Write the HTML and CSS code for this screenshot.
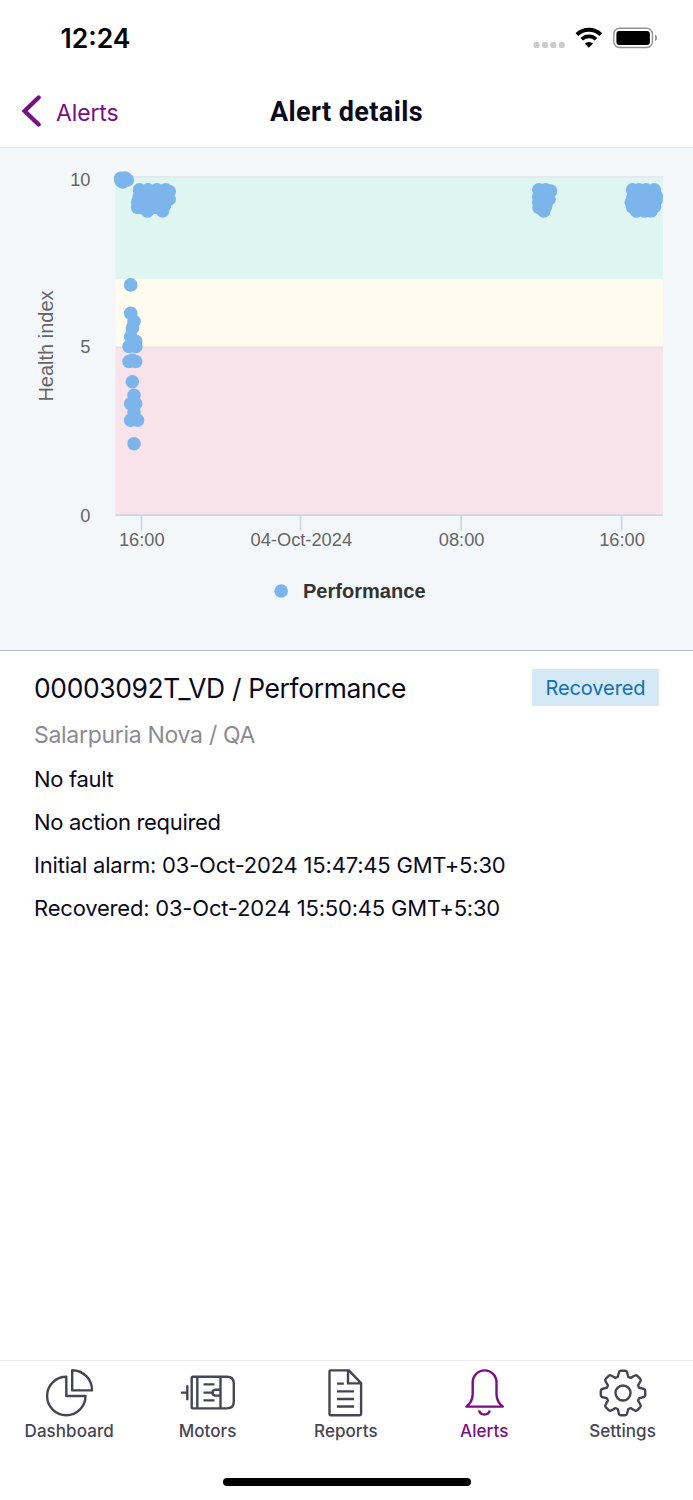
FILE: index.html
```html
<!DOCTYPE html>
<html lang="en">
<head>
<meta charset="utf-8">
<title>Alert details</title>
<link rel="stylesheet" href="styles.css">
</head>
<body>
<div class="screen">
  <header class="status-bar">
    <span class="clock">12:24</span>
    <svg class="status-icons" width="126" height="24" viewBox="532 26 126 24" aria-hidden="true">
      <g fill="#cbcbcb"><rect x="533.5" y="42" width="6" height="6" rx="2"/><rect x="542" y="42" width="6" height="6" rx="2"/><rect x="550.3" y="42" width="6" height="6" rx="2"/><rect x="558.8" y="42" width="6" height="6" rx="2"/></g>
      <path d="M576.9 34.6a17 17 0 0 1 24 0" fill="none" stroke="#000" stroke-width="4"/>
      <path d="M581.8 39.3a10 10 0 0 1 14.2 0" fill="none" stroke="#000" stroke-width="3.6"/>
      <path d="M588.9 47.8l-4.1-4.2a6 6 0 0 1 8.2 0z"/>
      <rect x="613.8" y="28.3" width="38.6" height="19.2" rx="5.6" fill="#fff" stroke="#929292" stroke-width="1.4"/>
      <rect x="616.4" y="30.9" width="33.5" height="14" rx="3"/>
      <path d="M655 34.6c2.7 1.4 2.7 5.2 0 6.6z" fill="#929292"/>
    </svg>
  </header>
  <nav class="nav-bar">
    <a class="back"><svg width="22" height="34" viewBox="0 0 22 34" aria-hidden="true"><path d="M18.6 2.5 4.6 16l14 13.5" fill="none" stroke="#780f83" stroke-width="4.3" stroke-linecap="round"/></svg><span>Alerts</span></a>
    <h1 class="title">Alert details</h1>
  </nav>
  <section class="chart">
    <svg width="693" height="502" viewBox="0 148 693 502" role="img" aria-label="Health index">
      <path fill="#dff5f1" d="M115.5 178H663v101H115.5z"/>
      <path fill="#fffbee" d="M115.5 279H663v68H115.5z"/>
      <path fill="#f8e3ea" d="M115.5 347H663v168H115.5z"/>
      <path d="M115.5 177H663M115.5 347.3H663" stroke="#e3e3e6" stroke-width="1.6"/>
      <path d="M115.5 515.2H663M141.5 515v15.5M300.5 515v15.5M461.2 515v15.5M621.7 515v15.5" stroke="#ccd6eb" stroke-width="1.7"/>
      <g class="axis-text">
        <text x="90.5" y="186" text-anchor="end">10</text>
        <text x="90.5" y="353" text-anchor="end">5</text>
        <text x="90.5" y="522" text-anchor="end">0</text>
        <text x="141.8" y="545.5" text-anchor="middle">16:00</text>
        <text x="301.3" y="545.5" text-anchor="middle">04-Oct-2024</text>
        <text x="461.6" y="545.5" text-anchor="middle">08:00</text>
        <text x="622" y="545.5" text-anchor="middle">16:00</text>
      </g>
      <text class="axis-title" transform="translate(53 346) rotate(-90)" text-anchor="middle">Health index</text>
      <g class="points">
        <circle cx="120.7" cy="178.2" r="6.8"/><circle cx="120.9" cy="180.5" r="6.8"/><circle cx="122.6" cy="182" r="6.8"/><circle cx="125" cy="178" r="6.8"/><circle cx="127.3" cy="180" r="6.8"/>
        <circle cx="139.5" cy="189.7" r="6.8"/><circle cx="148" cy="189.7" r="6.8"/><circle cx="157" cy="189.7" r="6.8"/><circle cx="165.7" cy="189.7" r="6.8"/><circle cx="169.2" cy="191.5" r="6.8"/><circle cx="169.2" cy="199" r="6.8"/><circle cx="139.3" cy="196" r="6.8"/><circle cx="137.7" cy="202" r="6.8"/><circle cx="137.7" cy="207.5" r="6.8"/><circle cx="141.5" cy="207.5" r="6.8"/><circle cx="147.5" cy="211" r="6.8"/><circle cx="162.5" cy="211" r="6.8"/><circle cx="164.5" cy="205.5" r="6.8"/><circle cx="155" cy="207.2" r="6.8"/><circle cx="145" cy="199" r="6.8"/><circle cx="155" cy="199" r="6.8"/><circle cx="148" cy="203" r="6.8"/><circle cx="162" cy="198" r="6.8"/>
        <circle cx="538.8" cy="189.7" r="6.8"/><circle cx="545.5" cy="189.7" r="6.8"/><circle cx="550.5" cy="191" r="6.8"/><circle cx="538.8" cy="196.5" r="6.8"/><circle cx="549" cy="199" r="6.8"/><circle cx="538.8" cy="202" r="6.8"/><circle cx="539" cy="207.5" r="6.8"/><circle cx="543.7" cy="211" r="6.8"/><circle cx="545.7" cy="206" r="6.8"/>
        <circle cx="632.6" cy="189.7" r="6.8"/><circle cx="639" cy="189.7" r="6.8"/><circle cx="646" cy="189.7" r="6.8"/><circle cx="654.2" cy="189.7" r="6.8"/><circle cx="656.2" cy="196" r="6.8"/><circle cx="656" cy="200" r="6.8"/><circle cx="631.2" cy="202.5" r="6.8"/><circle cx="632.6" cy="207" r="6.8"/><circle cx="636.5" cy="211" r="6.8"/><circle cx="644.5" cy="211" r="6.8"/><circle cx="651" cy="211" r="6.8"/><circle cx="654.5" cy="206.5" r="6.8"/><circle cx="633" cy="197" r="6.8"/><circle cx="643" cy="200" r="6.8"/><circle cx="650" cy="201" r="6.8"/>
        <circle cx="130.7" cy="284.9" r="6.8"/><circle cx="130.7" cy="313.3" r="6.8"/><circle cx="134" cy="321.3" r="6.8"/><circle cx="132.4" cy="328" r="6.8"/><circle cx="130.7" cy="336.5" r="6.8"/><circle cx="135.7" cy="341.3" r="6.8"/><circle cx="129" cy="346.5" r="6.8"/><circle cx="135.8" cy="346.5" r="6.8"/>
        <circle cx="129" cy="361.5" r="6.8"/><circle cx="132.3" cy="360.2" r="6.8"/><circle cx="135.7" cy="361.5" r="6.8"/>
        <circle cx="132.3" cy="381.8" r="6.8"/><circle cx="134" cy="395.2" r="6.8"/><circle cx="130.7" cy="403.7" r="6.8"/><circle cx="135.7" cy="403.7" r="6.8"/><circle cx="134" cy="412" r="6.8"/><circle cx="130.7" cy="420.3" r="6.8"/><circle cx="137.5" cy="420.3" r="6.8"/><circle cx="134" cy="443.7" r="6.8"/>
        <circle cx="281.2" cy="591" r="6.8"/>
      </g>
      <text class="legend" x="303" y="598" textLength="122.5">Performance</text>
    </svg>
  </section>
  <main class="details">
    <div class="heading"><h2>00003092T_VD / Performance</h2><span class="badge">Recovered</span></div>
    <p class="site">Salarpuria Nova / QA</p>
    <p>No fault</p>
    <p>No action required</p>
    <p class="alarm">Initial alarm: 03-Oct-2024 15:47:45 GMT+5:30</p>
    <p class="alarm">Recovered: 03-Oct-2024 15:50:45 GMT+5:30</p>
  </main>
  <footer class="tab-bar">
    <a class="tab"><svg viewBox="41 1367 56 52"><path d="M66.3 1376.8a19.2 19.2 0 1 0 19.2 19.2H66.3zM72.2 1370.2v20.2h19.8a19.9 19.9 0 0 0-19.8-20.2z"/></svg><span>Dashboard</span></a>
    <a class="tab"><svg viewBox="180 1367 56 52"><path d="M193 1376.8h34q6.8 0 6.8 6.8v18q0 6.8-6.8 6.8h-34q-1.3 0-1.3-1.3v-29q0-1.3 1.3-1.3zM197.3 1377v31M220.5 1377v31M203.5 1384.4h11M203.5 1392.6h9M203.5 1400.4h11M220 1389.8h-5l-2.2 1.1v3.6l2.2 1.1h5M181 1392.6h6M187.3 1385.2v15"/></svg><span>Motors</span></a>
    <a class="tab"><svg viewBox="318 1367 56 52"><path d="M330.8 1370.4h18l12.3 12.8v30.3q0 1.7-1.7 1.7h-28.6q-1.3 0-1.3-1.7v-41.5q0-1.6 1.3-1.6zM348 1370.8v12.6h12.8M337 1383.6h6.8M337 1391.4h17M337 1399h17M337 1406.5h17"/></svg><span>Reports</span></a>
    <a class="tab active"><svg viewBox="456 1367 56 52"><path d="M466.3 1406.6q6.4-4.8 6.4-12.6v-11.7a11.9 11.9 0 0 1 23.8 0v11.7q0 7.8 6.4 12.6zM479 1410.5c1.4 5.3 9.4 5.3 10.8 0"/></svg><span>Alerts</span></a>
    <a class="tab"><svg viewBox="-28 -26 56 52"><path d="M-5.3-16-4-20.8Q-3.6-22.2-2.3-22.2H2.3Q3.6-22.2 4-20.8L5.3-16 7.6-15.1 11.9-17.5Q13.2-18.3 14.1-17.3L17.3-14.1Q18.3-13.2 17.5-11.9L15.1-7.6 16-5.3 20.8-4Q22.2-3.6 22.2-2.3V2.3Q22.2 3.6 20.8 4L16 5.3 15.1 7.6 17.5 11.9Q18.3 13.2 17.3 14.1L14.1 17.3Q13.2 18.3 11.9 17.5L7.6 15.1 5.3 16 4 20.8Q3.6 22.2 2.3 22.2H-2.3Q-3.6 22.2-4 20.8L-5.3 16-7.6 15.1-11.9 17.5Q-13.2 18.3-14.1 17.3L-17.3 14.1Q-18.3 13.2-17.5 11.9L-15.1 7.6-16 5.3-20.8 4Q-22.2 3.6-22.2 2.3V-2.3Q-22.2-3.6-20.8-4L-16-5.3-15.1-7.6-17.5-11.9Q-18.3-13.2-17.3-14.1L-14.1-17.3Q-13.2-18.3-11.9-17.5L-7.6-15.1Z"/><circle r="7.5"/></svg><span>Settings</span></a>
  </footer>
  <div class="home-indicator"></div>
</div>
</body>
</html>
```
FILE: styles.css
```css
* { box-sizing: border-box; }
body { margin: 0; background: #fff; font-family: Inter, "Liberation Sans", sans-serif; color: #0a0a1c; }
.screen { width: 693px; height: 1500px; display: flex; flex-direction: column; }
.status-bar { height: 76px; display: flex; justify-content: space-between; align-items: center; padding: 0 35px 0 60.5px; }
.clock { font-size: 26.5px; font-weight: 600; color: #000; line-height: 30px; }
.status-icons { display: block; }
.nav-bar { height: 72px; border-bottom: 1px solid #e4e4e6; display: grid; grid-template-columns: 1fr auto 1fr; align-items: center; }
.back { display: flex; align-items: center; gap: 14px; padding-left: 20px; font-size: 23px; letter-spacing: -0.15px; color: #780f83; }
.back span { padding-top: 3px; }
.title { margin: 0; font: 700 27px/32px Roboto, sans-serif; letter-spacing: 0.4px; }
.chart { height: 503px; background: #f3f7fa; border-bottom: 1.6px solid #bbbac4; flex: none; }
.chart svg { display: block; }
.axis-text { font: 18.3px "Liberation Sans", sans-serif; fill: #666; }
.axis-title { font: 20px "Liberation Sans", sans-serif; fill: #666; }
.legend { font: 700 20px "Liberation Sans", sans-serif; fill: #333; }
.points { fill: #7cb5ec; }
.details { flex: 1; padding: 18px 34px 0; }
.heading { display: flex; justify-content: space-between; align-items: center; height: 37px; }
.heading h2 { margin: 0; font-size: 26.4px; font-weight: 400; letter-spacing: -0.33px; white-space: nowrap; }
.badge { background: #d5e8f5; color: #0f70b7; width: 127px; height: 37px; line-height: 39px; text-align: center; font-size: 20px; letter-spacing: -0.1px; }
.details p { margin: 0; font-size: 22px; line-height: 43px; letter-spacing: -0.33px; white-space: nowrap; }
.details .alarm { letter-spacing: -0.2px; }
.details .site { margin-top: 6px; font-size: 23px; line-height: 46px; letter-spacing: -0.3px; color: #8b8b94; }
.tab-bar { height: 110px; border-top: 1px solid #ececee; display: flex; padding-top: 6px; flex: none; }
.tab { width: 138.35px; display: flex; flex-direction: column; align-items: center; color: #464554; font-size: 17px; font-weight: 500; }
.tab svg { width: 56px; height: 52px; fill: none; stroke: currentColor; stroke-width: 2.4; stroke-linejoin: round; }
.tab span { line-height: 24px; letter-spacing: 0.06px; }
.active { color: #780f83; }
.home-indicator { width: 248px; height: 8px; border-radius: 4px; background: #000; margin: 8px auto 14px; flex: none; }
```
